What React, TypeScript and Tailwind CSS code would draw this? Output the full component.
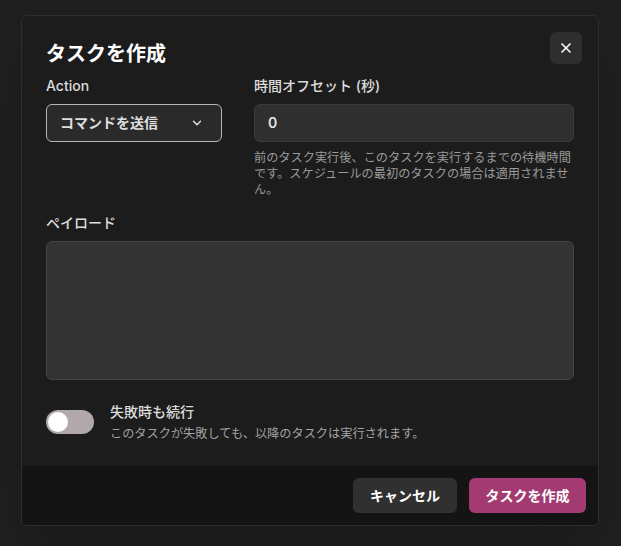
import { useState } from "react";
import { ChevronDown, X } from "lucide-react";

const font = { fontFamily: '"Inter", "Noto Sans CJK JP", sans-serif' };

function Toggle({ on, onChange }: { on: boolean; onChange: (v: boolean) => void }) {
  return (
    <button
      onClick={() => onChange(!on)}
      className={`relative w-12 h-6 rounded-full shrink-0 transition-colors ${
        on ? "bg-[#a33a72]" : "bg-[#b1a8ad]"
      }`}
    >
      <span
        className={`absolute top-0.5 left-0.5 w-5 h-5 bg-white rounded-full transition-transform ${
          on ? "translate-x-6" : ""
        }`}
      />
    </button>
  );
}

export default function App() {
  const [continueOnFail, setContinueOnFail] = useState(false);

  return (
    <div className="w-[621px] h-[546px] bg-[#1f1f1f] pt-[15px] pl-[21px]" style={font}>
      <div className="relative w-[578px] h-[511px] bg-[#1c1c1c] border border-[#2e2e2e] rounded-md flex flex-col overflow-hidden shadow-2xl">
        {/* Close */}
        <button className="absolute top-4 right-4 w-8 h-8 rounded-md bg-[#2e2e2e] flex items-center justify-center text-white">
          <X size={16} strokeWidth={2.5} />
        </button>

        <div className="flex-1 px-6 pt-6">
          <h2 className="text-xl leading-7 font-bold text-white">タスクを作成</h2>

          <div className="grid grid-cols-[176px_1fr] gap-x-8 mt-2">
            <div>
              <label className="block text-sm leading-5 font-medium text-[#dcdcdc]">Action</label>
              <button className="mt-2 w-full h-[38px] flex items-center justify-between px-[13px] rounded-md border border-[#b5b5b5] bg-[#2a2a2a] text-sm font-semibold text-[#dedede]">
                コマンドを送信
                <ChevronDown size={14} strokeWidth={2.5} className="mr-1" />
              </button>
            </div>
            <div>
              <label className="block text-sm leading-5 font-medium text-[#dcdcdc]">時間オフセット (秒)</label>
              <div className="mt-2 h-[38px] flex items-center px-[13px] rounded-md border border-[#3a3a3a] bg-[#2f2f2f] text-sm font-semibold text-[#e6e6e6]">
                0
              </div>
              <p className="mt-2 text-[12.2px] leading-4 text-[#9a9a9a]">
                前のタスク実行後、このタスクを実行するまでの待機時間です。スケジュールの最初のタスクの場合は適用されません。
              </p>
            </div>
          </div>

          <label className="block mt-[15px] text-sm leading-5 font-medium text-[#dcdcdc]">ペイロード</label>
          <div className="mt-2 h-[139px] rounded-md border border-[#444] bg-[#333333]" />

          <div className="mt-[22px] flex items-center gap-4">
            <Toggle on={continueOnFail} onChange={setContinueOnFail} />
            <div>
              <p className="text-sm leading-5 font-medium text-[#dcdcdc]">失敗時も続行</p>
              <p className="mt-1 text-[12.2px] leading-4 text-[#a3a3a3]">
                このタスクが失敗しても、以降のタスクは実行されます。
              </p>
            </div>
          </div>
        </div>

        <div className="bg-[#141414] p-3 flex justify-end gap-3">
          <button className="h-[35px] px-4 rounded-md bg-[#303030] text-sm font-bold text-white w-[104px]">
            キャンセル
          </button>
          <button className="h-[35px] px-4 rounded-md bg-[#a33a72] text-sm font-bold text-white w-[117px]">
            タスクを作成
          </button>
        </div>
      </div>
    </div>
  );
}
